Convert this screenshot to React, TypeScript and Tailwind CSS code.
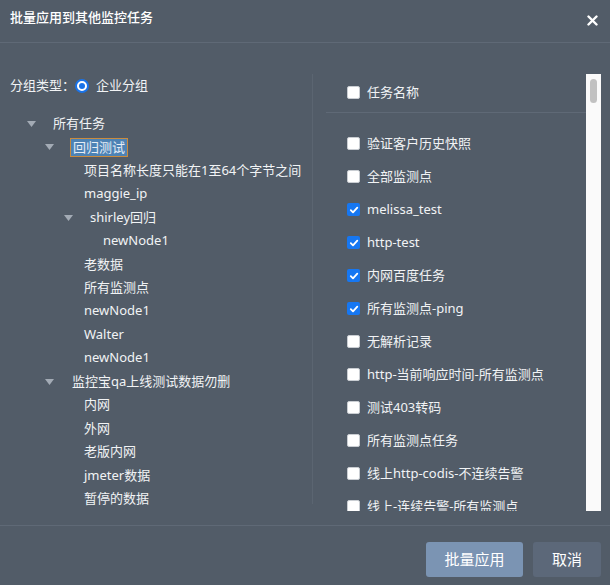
import React from "react";

type TreeRow = { label: string; tri?: number; text: number; selected?: boolean };

const tree: TreeRow[] = [
  { label: "所有任务", tri: 27, text: 53 },
  { label: "回归测试", tri: 45, text: 70, selected: true },
  { label: "项目名称长度只能在1至64个字节之间", text: 84 },
  { label: "maggie_ip", text: 84 },
  { label: "shirley回归", tri: 64, text: 90 },
  { label: "newNode1", text: 103 },
  { label: "老数据", text: 84 },
  { label: "所有监测点", text: 84 },
  { label: "newNode1", text: 84 },
  { label: "Walter", text: 84 },
  { label: "newNode1", text: 84 },
  { label: "监控宝qa上线测试数据勿删", tri: 45, text: 72 },
  { label: "内网", text: 84 },
  { label: "外网", text: 84 },
  { label: "老版内网", text: 84 },
  { label: "jmeter数据", text: 84 },
  { label: "暂停的数据", text: 84 },
];

const tasks: { label: string; checked: boolean }[] = [
  { label: "验证客户历史快照", checked: false },
  { label: "全部监测点", checked: false },
  { label: "melissa_test", checked: true },
  { label: "http-test", checked: true },
  { label: "内网百度任务", checked: true },
  { label: "所有监测点-ping", checked: true },
  { label: "无解析记录", checked: false },
  { label: "http-当前响应时间-所有监测点", checked: false },
  { label: "测试403转码", checked: false },
  { label: "所有监测点任务", checked: false },
  { label: "线上http-codis-不连续告警", checked: false },
  { label: "线上-连续告警-所有监测点", checked: false },
];

function Checkbox({ checked }: { checked: boolean }) {
  if (checked) {
    return (
      <span className="flex h-[13px] w-[13px] shrink-0 items-center justify-center rounded-[2px] bg-[#1677f2]">
        <svg width="10" height="10" viewBox="0 0 10 10">
          <path d="M1.8 5.2 L4 7.4 L8.3 2.6" fill="none" stroke="#fff" strokeWidth="1.8" strokeLinecap="round" strokeLinejoin="round" />
        </svg>
      </span>
    );
  }
  return <span className="block h-[13px] w-[13px] shrink-0 rounded-[2px] border border-[#c9cdd2] bg-white" />;
}

function Tri() {
  return (
    <svg width="9" height="6" viewBox="0 0 9 6">
      <path d="M0 0 H9 L4.5 6 Z" fill="#a3abb5" />
    </svg>
  );
}

export default function App() {
  return (
    <div
      className="flex h-[585px] w-[610px] flex-col overflow-hidden bg-[#525c68] text-[13px] text-[#f1f3f5]"
      style={{ fontFamily: '"Noto Sans", "Noto Sans CJK SC", sans-serif' }}
    >
      {/* header */}
      <div className="flex h-[43px] shrink-0 items-start justify-between border-b border-[#5f6976] pl-[10px] pr-[12px] pt-[7px]">
        <span className="text-[13px] font-medium leading-[20px] text-white">批量应用到其他监控任务</span>
        <svg width="11" height="11" viewBox="0 0 11 11" className="mt-[8px]">
          <path d="M1.5 1.5 L9.5 9.5 M9.5 1.5 L1.5 9.5" stroke="#fff" strokeWidth="2.4" strokeLinecap="round" />
        </svg>
      </div>

      {/* body */}
      <div className="flex h-[482px] shrink-0 pt-[31px]">
        {/* left */}
        <div className="h-[430px] w-[313px] shrink-0 border-r border-[#5b6571]">
          <div className="mt-[1px] flex h-[22px] items-center pl-[10px]">
            <span>分组类型：</span>
            <span className="flex h-[14px] w-[14px] items-center justify-center rounded-full border-[2px] border-[#1a73e8] bg-white">
              <span className="block h-[6px] w-[6px] rounded-full bg-[#1a73e8]" />
            </span>
            <span className="ml-[7px]">企业分组</span>
          </div>
          <div className="mt-[15px]">
            {tree.map((r, i) => (
              <div key={i} className="relative flex h-[23.45px] items-center whitespace-nowrap">
                {r.tri !== undefined && (
                  <span className="absolute top-[9px]" style={{ left: r.tri }}>
                    <Tri />
                  </span>
                )}
                {r.selected ? (
                  <span
                    className="border border-[#c98b3e] bg-[#4d83b5] px-[2px] leading-[17px] text-[#e6edf5]"
                    style={{ marginLeft: r.text }}
                  >
                    {r.label}
                  </span>
                ) : (
                  <span style={{ marginLeft: r.text }}>{r.label}</span>
                )}
              </div>
            ))}
          </div>
        </div>

        {/* right */}
        <div className="flex h-[437px] w-[288px] shrink-0">
          <div className="flex-1 overflow-hidden">
            <div className="flex h-[34px] items-center pl-[34px] pt-[3px]">
              <Checkbox checked={false} />
              <span className="ml-[7px]">任务名称</span>
            </div>
            <div className="ml-[13px] mt-[4px] h-px bg-[#5f6976]" />
            <div className="mt-[14px]">
              {tasks.map((t, i) => (
                <div key={i} className="flex h-[33px] items-center whitespace-nowrap pl-[34px]">
                  <Checkbox checked={t.checked} />
                  <span className="ml-[7px]">{t.label}</span>
                </div>
              ))}
            </div>
          </div>
          <div className="h-full w-[15px] shrink-0 bg-[#fafafa] px-[4px] pt-[5px]">
            <div className="h-[24px] w-[7px] rounded-full bg-[#c1c1c1]" />
          </div>
        </div>
      </div>

      {/* footer */}
      <div className="flex flex-1 items-start justify-end gap-[10px] border-t border-[#5f6976] pr-[9px] pt-[16px]">
        <button className="h-[35px] w-[97px] rounded-[3px] bg-[#7b94b3] text-[15px] text-white">批量应用</button>
        <button className="h-[35px] w-[68px] rounded-[3px] bg-[#5c6879] text-[15px] text-white">取消</button>
      </div>
    </div>
  );
}
